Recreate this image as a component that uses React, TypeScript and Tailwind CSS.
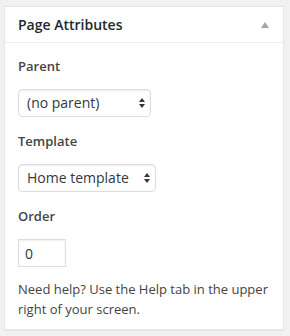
import React from "react";

function UpDown() {
  return (
    <svg width="6" height="10" viewBox="0 0 6 10" className="block">
      <path d="M0 4 L3 0 L6 4 Z" fill="#32373c" />
      <path d="M0 6 L3 10 L6 6 Z" fill="#32373c" />
    </svg>
  );
}

function Select({ text, width }: { text: string; width: string }) {
  return (
    <div
      className={`${width} h-[28px] flex items-center justify-between pl-[8px] pr-[5px] border border-[#ddd] rounded-[4px] bg-white shadow-[inset_0_1px_2px_rgba(0,0,0,0.07)] text-[14px] text-[#32373c]`}
    >
      <span className="leading-[20px]">{text}</span>
      <UpDown />
    </div>
  );
}

export default function App() {
  return (
    <div
      className="w-[290px] h-[336px] bg-[#f1f1f1] pt-[6px] pl-[4px]"
      style={{ fontFamily: '"Open Sans", "Noto Sans", sans-serif' }}
    >
      <div className="w-[280px] h-[324px] bg-white border border-[#e5e5e5] shadow-[0_1px_1px_rgba(0,0,0,0.04)]">
        <div className="h-[36px] border-b border-[#eee] flex items-center justify-between pl-[13px] pr-[14px]">
          <span className="text-[14px] font-semibold text-[#23282d] leading-[20px]">Page Attributes</span>
          <svg width="8" height="6" viewBox="0 0 8 6" className="block">
            <path d="M0 6 L4 0 L8 6 Z" fill="#a0a5aa" />
          </svg>
        </div>
        <div className="pl-[13px] pr-[12px] pt-[13px] flex flex-col text-[#444]">
          <div className="text-[13px] font-semibold leading-[20px]">Parent</div>
          <div className="mt-[13px]">
            <Select text="(no parent)" width="w-[133px]" />
          </div>
          <div className="mt-[14px] text-[13px] font-semibold leading-[20px]">Template</div>
          <div className="mt-[13px]">
            <Select text="Home template" width="w-[138px]" />
          </div>
          <div className="mt-[14px] text-[13px] font-semibold leading-[20px]">Order</div>
          <div className="mt-[13px] w-[48px] h-[28px] flex items-center pl-[6px] border border-[#ddd] bg-white shadow-[inset_0_1px_2px_rgba(0,0,0,0.07)] text-[14px] text-[#32373c]">
            0
          </div>
          <p className="mt-[13px] text-[13px] leading-[19.5px]">
            Need help? Use the Help tab in the upper right of your screen.
          </p>
        </div>
      </div>
    </div>
  );
}
